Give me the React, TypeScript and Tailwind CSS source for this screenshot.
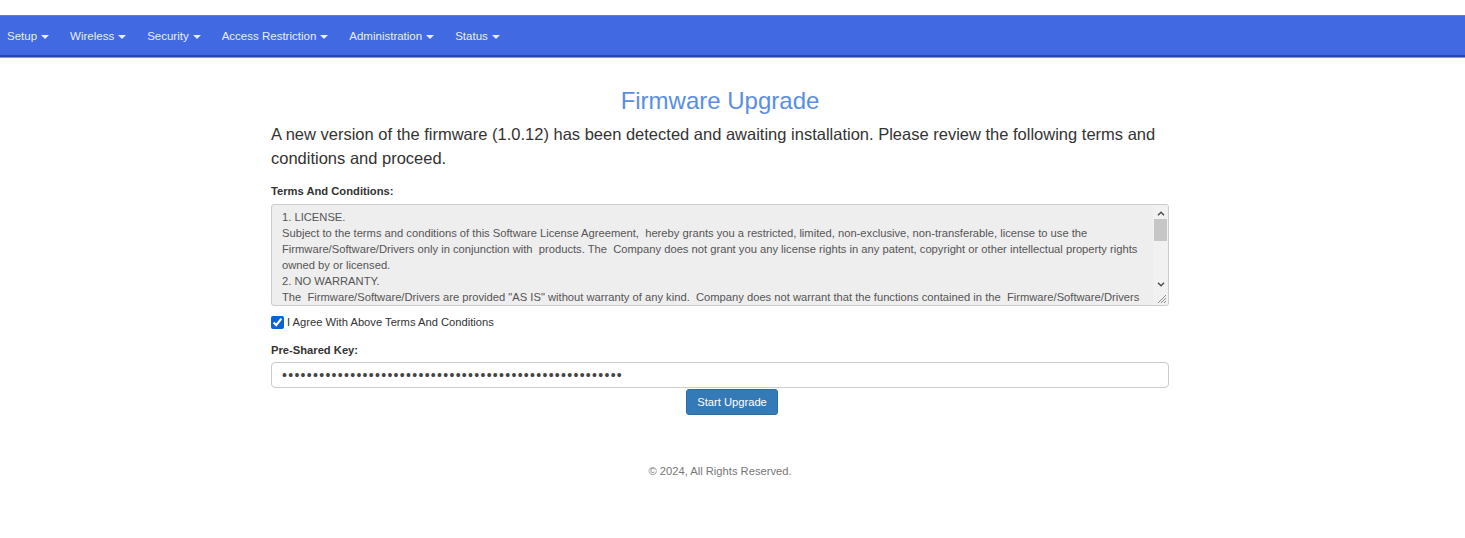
const navItems = ['Setup', 'Wireless', 'Security', 'Access Restriction', 'Administration', 'Status']

const license = `1. LICENSE.
Subject to the terms and conditions of this Software License Agreement,  hereby grants you a restricted, limited, non-exclusive, non-transferable, license to use the Firmware/Software/Drivers only in conjunction with  products. The  Company does not grant you any license rights in any patent, copyright or other intellectual property rights owned by or licensed.
2. NO WARRANTY.
The  Firmware/Software/Drivers are provided "AS IS" without warranty of any kind.  Company does not warrant that the functions contained in the  Firmware/Software/Drivers will meet your requirements or that the operation of the Firmware/Software/Drivers will be uninterrupted or error free.
3. LIMITATION OF LIABILITY.
In no event shall the Company be liable for any damages whatsoever arising out of the use of or inability to use the Firmware/Software/Drivers.`

function Caret() {
  return (
    <span className="ml-[4px] inline-block h-0 w-0 border-x-[4px] border-t-[4px] border-x-transparent border-t-[#e8eefa] align-middle" />
  )
}

function Chevron({ up }: { up?: boolean }) {
  return (
    <svg width="8" height="5" viewBox="0 0 8 5" className={up ? '' : 'rotate-180'}>
      <path d="M1 4.2 4 1.2 7 4.2" fill="none" stroke="#505050" strokeWidth="1.5" />
    </svg>
  )
}

function FakeScrollbar() {
  return (
    <div className="flex w-[15px] shrink-0 flex-col bg-[#f1f1f1]">
      <div className="flex h-[14px] items-center justify-center pt-[2px]">
        <Chevron up />
      </div>
      <div className="mx-[1px] h-[22px] bg-[#c6c6c6]" />
      <div className="flex-1" />
      <div className="flex h-[14px] items-center justify-center">
        <Chevron />
      </div>
      <div className="flex h-[14px] items-end justify-end pb-[1px] pr-[1px]">
        <svg width="11" height="11" viewBox="0 0 11 11">
          <path d="M10 2 2 10M10 5 5 10M10 8 8 10" stroke="#8a8a8a" strokeWidth="1" />
        </svg>
      </div>
    </div>
  )
}

export default function App() {
  return (
    <div className="min-h-[538px] bg-white pt-[15px] font-['Liberation_Sans',Arial,sans-serif] text-[#333]">
      <nav className="flex h-[42px] items-center gap-[21px] border-t border-b-2 border-t-[#7d7d7d] border-b-[#2747b3] bg-[#4169e1] pl-[7px] pt-[2px] shadow-[0_1px_0_#9a9a9a]">
        {navItems.map((item) => (
          <a key={item} className="flex items-center text-[11.5px] text-[#e8eefa]">
            {item}
            <Caret />
          </a>
        ))}
      </nav>

      <div className="ml-[271px] w-[898px]">
        <h1 className="mt-[29px] text-center text-[24px] leading-[30px] text-[#5a8ee6]">Firmware Upgrade</h1>
        <p className="mt-[6px] text-[16.5px] leading-[24px] text-[#333]">
          A new version of the firmware (1.0.12) has been detected and awaiting installation. Please review the following terms and conditions and proceed.
        </p>

        <label className="mt-[13px] block text-[11.2px] font-bold leading-[16px] text-[#333]">Terms And Conditions:</label>
        <div className="mt-[5px] flex h-[102px] w-full overflow-hidden rounded-[3px] border border-[#ccc] bg-[#eee]">
          <div className="flex-1 overflow-hidden whitespace-pre-wrap py-[4px] pl-[10px] pr-[4px] text-[11.2px] leading-[16px] text-[#555]">
            {license}
          </div>
          <FakeScrollbar />
        </div>

        <label className="mt-[8px] flex items-center gap-[3px] text-[11.2px] leading-[16px] text-[#333]">
          <input type="checkbox" defaultChecked className="m-0 h-[13px] w-[13px] shrink-0 accent-[#0b62d6]" />
          <span>I Agree With Above Terms And Conditions</span>
        </label>

        <label className="mt-[12px] block text-[11.2px] font-bold leading-[16px] text-[#333]">Pre-Shared Key:</label>
        <input
          type="password"
          readOnly
          value="xxxxxxxxxxxxxxxxxxxxxxxxxxxxxxxxxxxxxxxxxxxxxxxxxxxxxxx"
          className="mt-[4px] block h-[26px] w-full rounded-[4px] border border-[#ccc] bg-white px-[10px] text-[14px] tracking-[1.3px] text-[#444] outline-none"
        />

        <div className="flex justify-center pl-[24px]">
          <button className="mt-[1px] h-[26px] rounded-[3px] border border-[#2e6da4] bg-[#337ab7] px-[10px] text-[11.2px] text-white">
            Start Upgrade
          </button>
        </div>

        <p className="mt-[48px] text-center text-[11.2px] text-[#777]">© 2024, All Rights Reserved.</p>
      </div>
    </div>
  )
}
